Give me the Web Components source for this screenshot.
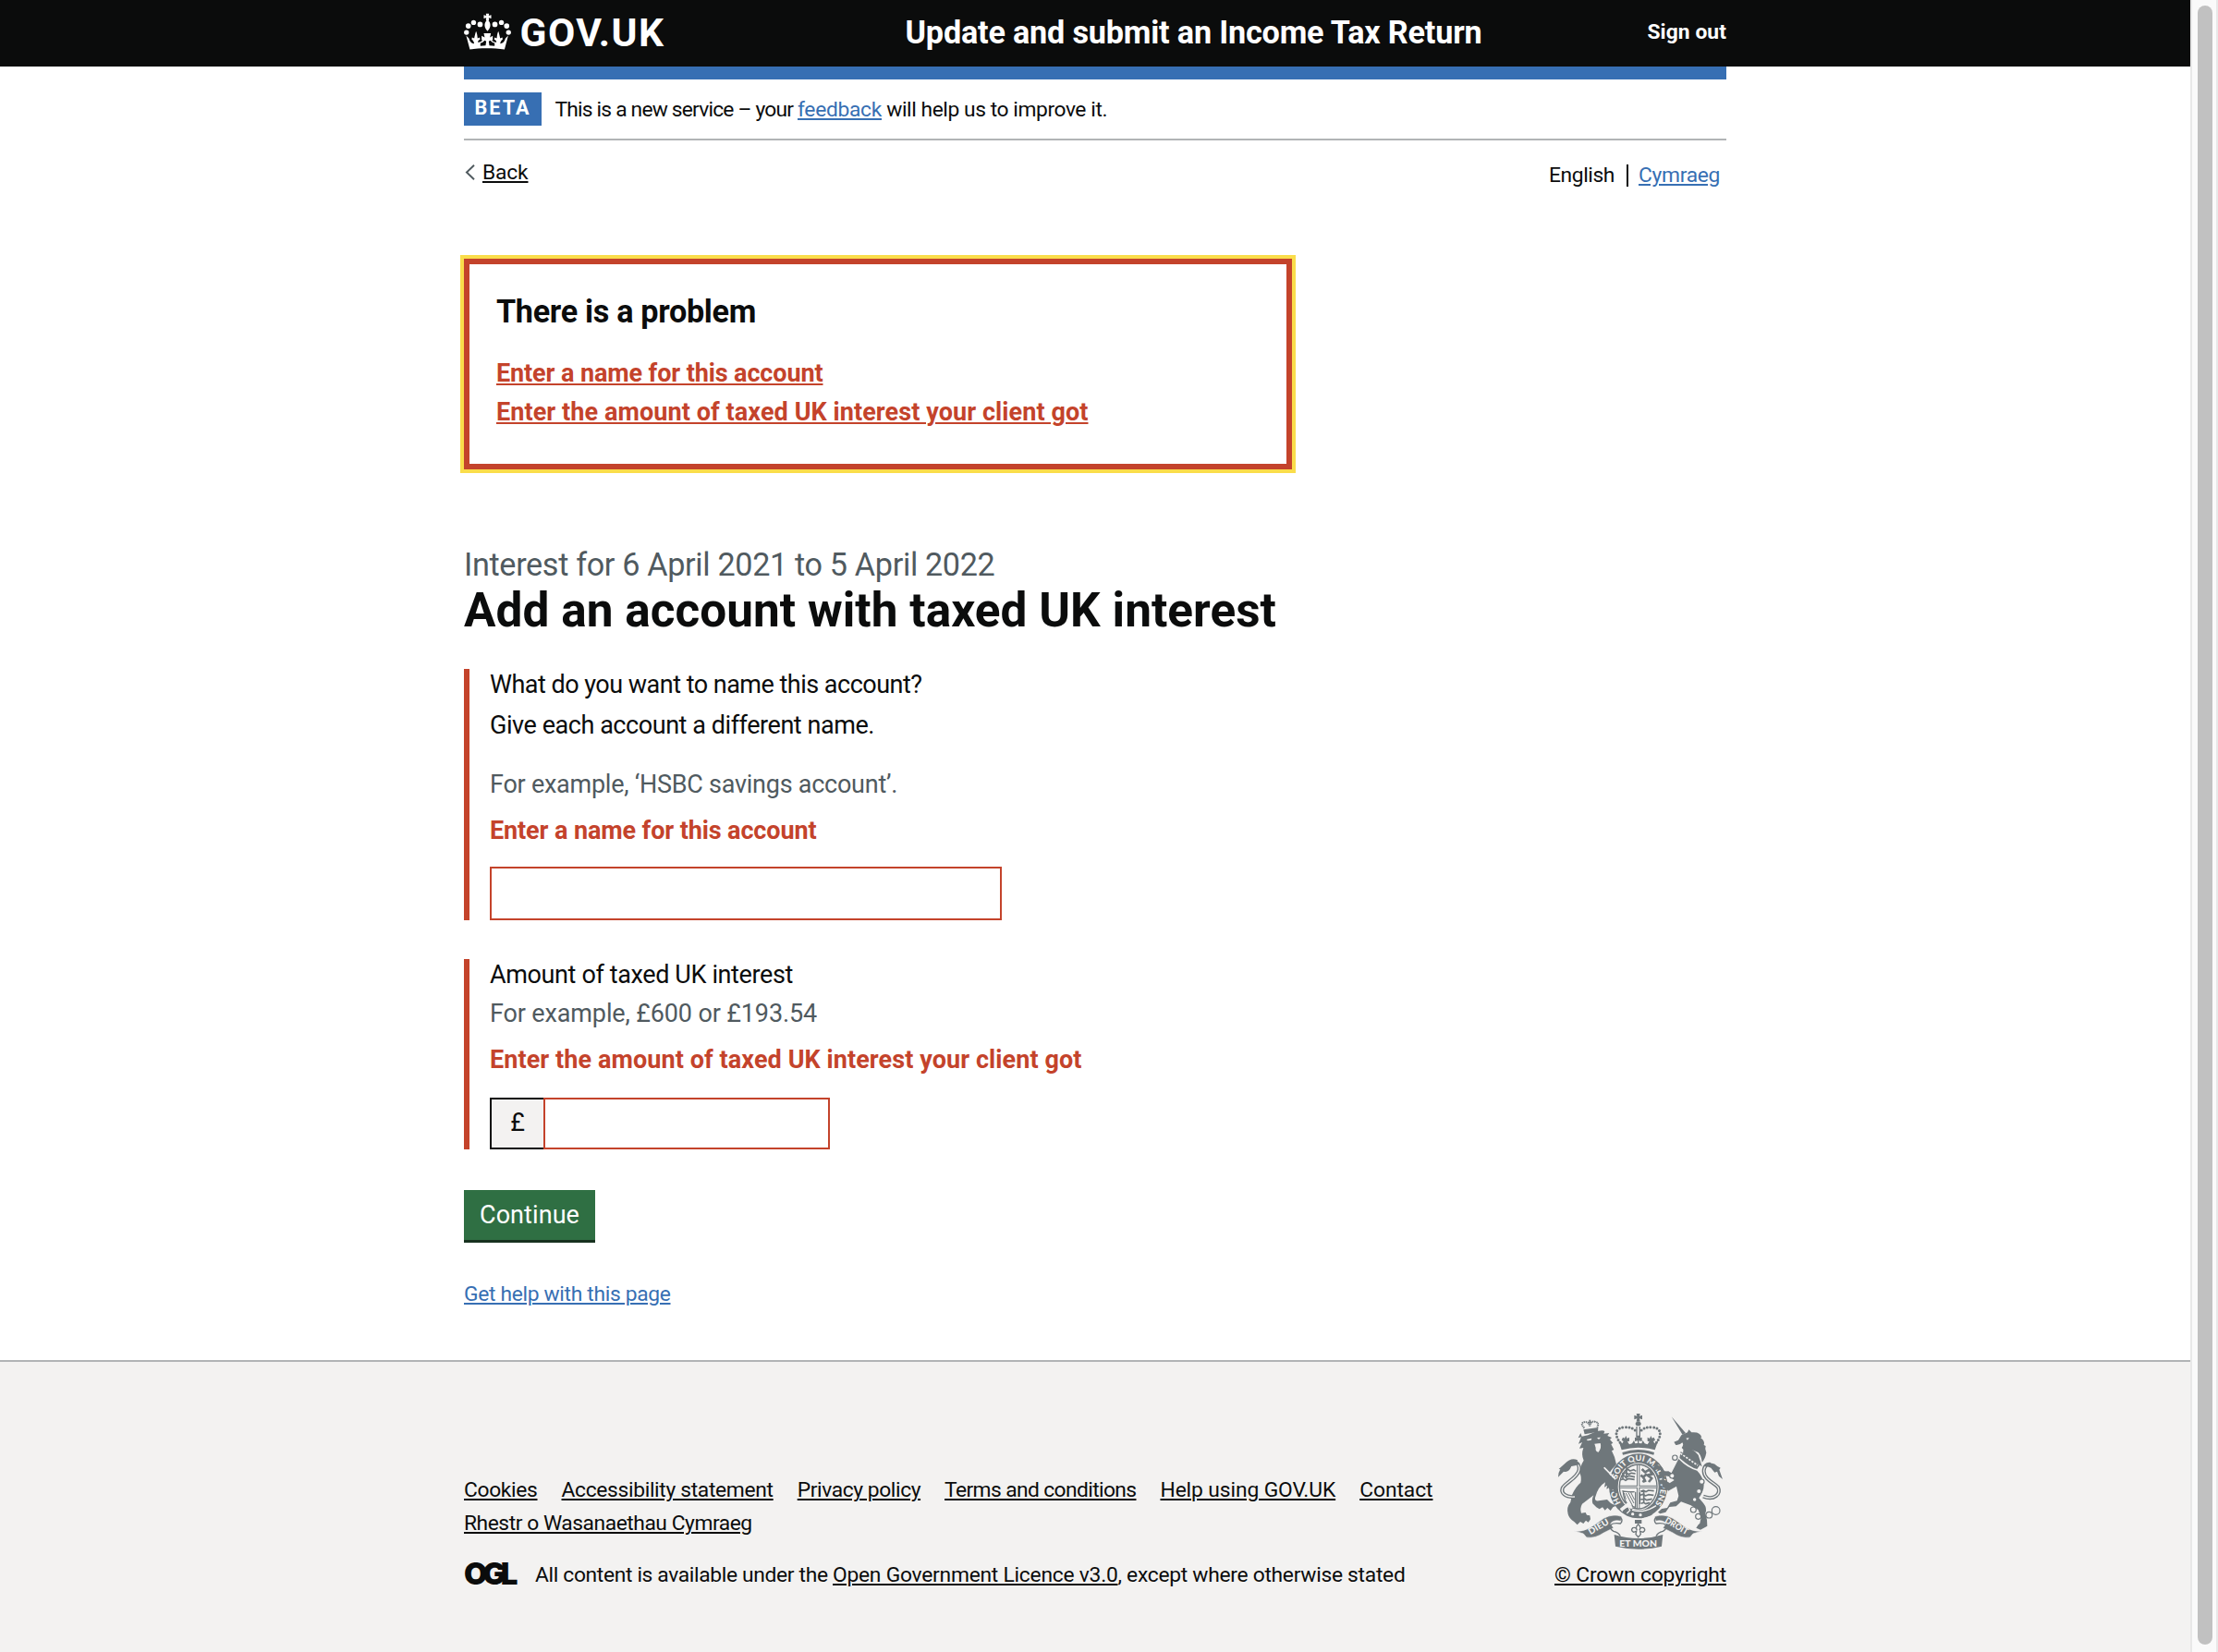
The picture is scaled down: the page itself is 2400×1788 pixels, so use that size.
<!DOCTYPE html>
<html lang="en">
<head>
<meta charset="utf-8">
<title>Add an account with taxed UK interest</title>
<style>
html,body{margin:0;padding:0;background:#fff}
body{font-family:Roboto,"Liberation Sans",sans-serif;color:#0b0c0c;width:2400px;height:1788px;overflow:hidden}
</style>
</head>
<body>
<tax-app></tax-app>
<script>
const define=(name,html,ready)=>customElements.define(name,class extends HTMLElement{
  connectedCallback(){
    if(this.shadowRoot)return;
    this.attachShadow({mode:'open'}).innerHTML=html;
    if(ready)ready(this);
  }
});

/* A run of text tracked to an exact advance width. */
define('type-run',`<style>
:host{display:inline-block;white-space:nowrap;font-size:22.8px;line-height:36px;text-align:left;padding-top:1px;margin-bottom:-1px}
:host([size=m]){font-size:27px;line-height:33px}
:host([size=l]){font-size:34.2px;line-height:42px}
:host([size=xl]){font-size:51.3px;line-height:58.6px}
:host([bold]){font-weight:700}
:host([link]) span{text-decoration:underline;text-decoration-thickness:2px;text-underline-offset:2px}
:host([blue]){color:#376fb3}
:host([red]){color:#c4432b}
:host([grey]){color:#505a5f}
</style><span><slot></slot></span>`,el=>{
  const w=+el.getAttribute('w');
  if(!w)return;
  const natural=el.shadowRoot.querySelector('span').getBoundingClientRect().width;
  el.style.letterSpacing=((w-natural)/el.textContent.length)+'px';
  el.style.width=w+'px';
});

define('crown-mark',`<style>:host{display:block;width:51px;height:39.5px}svg{display:block}</style>
<svg width="51" height="39.5" viewBox="20 26 152 118" fill="#fff">
<path d="M91 28h10l-1 7 8-2v11l-8-2 1 8H91l1-8-8 2V33l8 2z"/>
<path d="M96 47c6 5 10 13 9 21-1 8-5 12-9 17-4-5-8-9-9-17-1-8 3-16 9-21z"/>
<circle cx="28" cy="89" r="8"/><circle cx="34" cy="68" r="8.5"/><circle cx="51" cy="57" r="8"/><circle cx="72" cy="63" r="8.5"/>
<circle cx="164" cy="89" r="8"/><circle cx="158" cy="68" r="8.5"/><circle cx="141" cy="57" r="8"/><circle cx="120" cy="63" r="8.5"/>
<path d="M39 144 27 99l9 9c3 11 9 17 17 17-1-7-5-12-8-13l1-7 7 3c2-8 3-14 6-23 4 9 4 15 5 23l7-3 1 8c-5 1-7 4-7 8 6 1 12-2 16-8l-4 2v-15l10 5-3-13h23l-3 13 9-5v15l-4-2c4 6 10 9 16 8 0-4-2-7-7-8l1-8 7 3c1-8 1-14 5-23 3 9 4 15 6 23l7-3 1 7c-3 1-7 6-8 13 8 0 14-6 17-17l9-9-12 45c-36-5-79-5-115 0z"/>
<path d="M73 124q8-2 14-9l5 3-2 13-17 2zM119 124q-8-2-14-9l-5 3 2 13 17 2z" fill="#0b0c0c"/>
</svg>`);

define('site-header',`<style>
:host{display:block;background:#0b0c0c;height:72px}
.in{width:1366px;margin:0 auto;display:flex;align-items:flex-start;color:#fff}
crown-mark{margin-top:14px}
.logo{font-size:42.5px;line-height:70px;margin-left:9.5px}
.title{line-height:68.6px;margin-left:260px}
.out{line-height:68.4px;margin-left:auto}
</style><div class="in"><crown-mark></crown-mark><type-run class="logo" bold w="157">GOV.UK</type-run>
<type-run class="title" size="l" bold w="624">Update and submit an Income Tax Return</type-run>
<type-run class="out" bold w="85.5">Sign out</type-run></div>`);

define('phase-banner',`<style>
:host{display:flex;align-items:flex-start;border-top:14px solid #376fb3;border-bottom:2px solid #b1b4b6;padding:14px 0;height:36px}
.tag{background:#376fb3;color:#fff;height:36px;width:84px;display:flex;justify-content:center;align-items:flex-start;margin-right:14.5px}
.tag type-run{line-height:32.4px;font-size:21.6px}
</style><div class="tag"><type-run bold w="61">BETA</type-run></div>
<type-run w="262.5">This is a new service – your&nbsp;</type-run><type-run link blue w="91">feedback</type-run><type-run w="244">&nbsp;will help us to improve it.</type-run>`);

define('nav-row',`<style>
:host{display:flex;justify-content:space-between;align-items:flex-start;padding-top:16px}
.back,.lang{display:flex;align-items:flex-start}
.back svg{margin:10px 8px 0 1px}
.lang{padding:3px 7px 0 0}
i{width:2px;height:24px;background:#0b0c0c;margin:7px 11px 0 13px}
</style><div class="back"><svg width="11" height="17" viewBox="0 0 11 17" fill="none" stroke="#505a5f" stroke-width="2"><path d="M10 .8 2 8.5l8 7.7"/></svg><type-run link w="49.5">Back</type-run></div>
<div class="lang"><type-run w="71">English</type-run><i></i><type-run link blue w="88">Cymraeg</type-run></div>`);

define('error-summary',`<style>
:host{display:flex;flex-direction:column;align-items:flex-start;box-sizing:border-box;width:896px;height:228px;border:6px solid #c4432b;outline:4px solid #fadd4b;padding:29.3px 0 0 29px}
::slotted(*){line-height:42px!important}
.h{margin-bottom:23.5px}
</style><type-run class="h" size="l" bold w="281">There is a problem</type-run><slot></slot>`);

define('error-group',`<style>
:host{display:flex;flex-direction:column;align-items:flex-start;box-sizing:border-box;border-left:6px solid #c4432b;padding-left:22px}
</style><slot></slot>`);

define('text-field',`<style>
:host{display:flex;margin-top:auto}
input{box-sizing:border-box;border:2px solid #c4432b;border-radius:0;background:#fff;margin:0;padding:0 7px;font:27px Roboto,sans-serif;outline:0;width:554px;height:58px}
b{display:none;font-weight:400;font-size:27px;line-height:51px;box-sizing:border-box;width:58px;height:56px;border:2px solid #0b0c0c;border-right:0;background:#f3f2f1;text-align:center}
:host([money]) b{display:block}
:host([money]) input{width:310px;height:56px}
</style><b>£</b><input aria-label="value">`);

define('submit-button',`<style>
:host{display:block;box-sizing:border-box;width:142px;height:54px;background:#2f6f43;color:#fff;box-shadow:0 3px 0 #17311f;padding-left:17px}
type-run{line-height:53px}
</style><type-run size="m" w="108">Continue</type-run>`);

define('royal-arms',`<style>:host{display:block;width:178px;height:146px}svg{display:block;overflow:visible}text{font-family:Lato,sans-serif;font-weight:900}</style>
<svg width="178" height="146" viewBox="48 60 534 438" fill="#6f777b" stroke="none">
<defs><path id="ring" d="M252 350A72 84 0 1 1 364 350"/></defs>
<!-- central crown -->
<path d="M302 60h12l-2 8 9-3v14l-9-3 2 10h-12l2-10-9 3V65l9 3z"/><ellipse cx="308" cy="93" rx="9" ry="7"/>
<g fill="none" stroke="#6f777b" stroke-width="9" stroke-linecap="round" stroke-dasharray="0 10.5"><path d="M249 154C228 126 236 106 262 104c18-1 30 4 38 12"/><path d="M367 154c21-28 13-48-13-50-18-1-30 4-38 12"/></g>
<path d="M301 102h4v40h-4zM311 102h4v40h-4z"/>
<path d="m244 147 12 10 4-7-6-4 4-9 6 3 4-8 4 9 7-4v12l-6 2 6 9 9-3 6-10 4 10 8-1v-8l-9 2v-13l8 3-3-9h12l-3 9 9-3v13l-10-2v8l9 1 4-10 6 10 9 3 6-9-6-2v-12l7 4 4-9 4 8 6-3 4 9-6 4 4 7 12-10-11 31q-54-15-108 0z"/>
<path d="M256 186q52-18 104 0l-2 8q-50-16-100 0z"/>
<!-- garter and shield -->
<ellipse cx="308" cy="295" rx="95" ry="105"/><ellipse cx="308" cy="297" rx="66" ry="77" fill="#f3f2f1"/>
<ellipse cx="308" cy="297" rx="61" ry="72" fill="none" stroke="#6f777b" stroke-width="4"/>
<path d="M303 226h3v70h-57v-3h54zM310 226h3v67h54v3h-57zM303 368h3v-69h-57v3h54zM310 368h3v-66h54v-3h-57z"/>
<g fill="none" stroke="#6f777b" stroke-width="5" stroke-linejoin="round"><path d="m266 247 9-6 6 5 12-4 8 5m-41 9 8-5 8 6 10-4 13 2m-47 9 10-3 5 6 12-5 18 4m-47 9 9-3 8 5 9-6 20 3m-38-23v22m12-41v40"/>
<path d="m316 313 9-4 8 5 8-5 18 2m-44 14 10-4 6 6 10-4 17 2m-42 14 12-3 7 5 18-4m-36 15 9-3 6 4 13-4m-19-38v40m-13-35v38"/>
<path d="m320 240 10 10 14-8 10 14-16 4 14 10-10 12m-6-26-12 10-8-6m8 6 8 16m-10 0 8-6" stroke-width="8"/>
<path d="M256 311q12 4 40 3M259 313q2 32 18 45l22 6V314" stroke-width="4"/><path d="m268 318 22 42m-14-43 18 34m-10-35 12 24m-34-22 6 20" stroke-width="3"/></g>
<text font-size="26" fill="#f3f2f1" textLength="376" lengthAdjust="spacingAndGlyphs"><textPath href="#ring" textLength="376" lengthAdjust="spacingAndGlyphs">HONI SOIT QUI MAL Y PENSE</textPath></text>
<path d="m252 374 22-18 12 12" fill="none" stroke="#f3f2f1" stroke-width="12"/>
<path d="M257 376l18-14 16 12h34l38 2-12 14q-48 16-89-6z"/><path d="m262 366 14-4 5 12-10 10M288 373q40 12 78-14" fill="none" stroke="#f3f2f1" stroke-width="4"/><g fill="#f3f2f1"><circle cx="290" cy="386" r="5"/><circle cx="315" cy="389" r="5"/></g>
<!-- lion -->
<path d="m130 112 48-7-1 14-43 8z"/><path d="M133 107q-17-18 4-20 10 1 14 13 3-17 16-14 16 3 8 18" fill="none" stroke="#6f777b" stroke-width="6" stroke-dasharray="4 2"/><path d="M148 80h6l-1 6h5v5h-14v-5h5z"/>
<path d="m125 134 20-4 16-8q30-11 38-5l-3 8 18-2-6 9 14 6-6 6 10 11-6 4 9 18-7 4 9 20 6 24q-16 16-24 29l16 22 12 6-1 24 4 10-13 5-5-16-7 8-6-12-8 4 2-12-9 6 3-16q-24 14-33 50-2 12 12 10l27-4 12 12 17 8-10 5-8 11-10-9-8 8-8-10-10 6-10-6-12-12q-4-12 3-27-20 16-37 28-8 14-3 30l14-2 4 8 10 2 2 12-7 10-8-6-8 10-10-6-10 10-10-10q-16-10-20-25-6-22 8-38l5-24q11-26 28-40 4-17-3-31 0-21 13-41-9-19-1-41l-13 2 9-20-12 5 9-22-10 3 8-16z"/>
<g fill="#f3f2f1"><path d="m140 144 17-4-2 6-11 2zM174 138l12-1-6 7zM166 158l19-2q5 14-6 29-11-1-9-14z"/><path d="m199 233 37 38-3 4-38-39z"/></g>
<path d="M102 330c-32 3-45-13-40-28 8-17 49-33 54-59 2-15-4-24-15-24" fill="none" stroke="#6f777b" stroke-width="12"/><path d="M102 330c-32 3-45-13-40-28 8-17 49-33 54-59 1-9 0-13-3-17" fill="none" stroke="#f3f2f1" stroke-width="4"/>
<path d="M70 222q20-21 41-11l-4 17-16 3q-9 22-25 17l-18 18q0-15 7-25l-5-1z"/>
<!-- unicorn -->
<path d="m416 70 46 53-10 6z"/><path d="m424 152 14-6 10-16 20-9 4-9 9 9q29-3 33 17l-5-1q17 12 12 25l6 3q-4 10 2 22-4 22-14 31-2-22-12-32-19-10-34-9-15 3-20-6 8-10 2-17-8 9-21 8z"/><path d="M463 140l10-2-5 8z" fill="#f3f2f1"/><path d="M455 170q30 0 48 24l12 38-62-40z"/>
<path d="m446 183 62 44-9 13q-21-4-57-36zM439 207q29 30 60 38 20 20 22 47 0 20-16 42l14 16q14 17 7 33l5 22 1 20-22 12-14-6 7-10 5-5 4-18-9-25-24-15-32-12-16 15-22 2-12 17-18 5-7-5 12-11 18-3 10-17 22-6 5-16-7-31-27 15-4-6-14-6-2-14 20 4 20-13-21-16-15-3-12-17-15 3-5-9 9-8 17 6 10 15 22 7z"/><path d="M445 189l56 39" stroke="#f3f2f1" stroke-width="5" stroke-dasharray="7 4"/><path d="m383 248 23-1 17 10-3 9-25-4-4 12 20 12-5 9-20-15z"/>
<path d="M519 329c37 14 58-9 48-30-12-15-45-24-46-52 0-16 10-25 22-22" fill="none" stroke="#6f777b" stroke-width="12"/><path d="M519 329c37 14 58-9 48-30-12-15-45-24-46-52 0-8 2-12 5-15" fill="none" stroke="#f3f2f1" stroke-width="4"/>
<path d="M528 230q19-18 37 1l10 5-4 6 11 31-12-10-6-15-8 3-12-15z"/>
<g fill="#f3f2f1" stroke="#6f777b" stroke-width="3.5"><circle cx="427" cy="203" r="8"/><circle cx="418" cy="262" r="8"/><circle cx="514" cy="281" r="8"/><circle cx="505" cy="312" r="8"/><circle cx="491" cy="339" r="7"/></g>
<g fill="none" stroke="#6f777b" stroke-width="3.5"><circle cx="487" cy="372" r="9"/><circle cx="503" cy="394" r="9"/><circle cx="538" cy="389" r="10"/><circle cx="560" cy="375" r="13"/></g>
<!-- motto ribbon -->
<path d="M98 440q28 7 62-15l36-25q30-17 58-6l-2 15q-23-6-34 8l10 14-32 16q-27 19-56 15l-10-12z" stroke="#f3f2f1" stroke-width="2"/><path d="M518 440q-28 7-62-15l-36-25q-30-17-58-6l2 15q23-6 34 8l-10 14 32 16q27 19 56 15l10-12z" stroke="#f3f2f1" stroke-width="2"/>
<path d="M230 453q78 24 158 0l-4 38q-76 18-150 0z"/>
<g fill="none" stroke="#6f777b" stroke-width="4"><path d="M250 396q10 12 0 21-22-3-31 4-7 11 9 21 16 3 22 16M366 396q-10 12 0 21 22-3 31 4 7 11-9 21-16 3-22 16"/></g>
<path d="M297 405h22v12h-22z"/><path d="M308 419q11 9 4 19 3-11 14-7 8 8-3 14l-9-3 2 10-8 9-8-9 2-10-9 3q-11-6-3-14 11-4 14 7-7-10 4-19z" fill="#f3f2f1" stroke="#6f777b" stroke-width="4"/>
<g fill="#f3f2f1" font-size="28" text-anchor="middle"><text transform="translate(184 435) rotate(-31)" textLength="72" lengthAdjust="spacingAndGlyphs">DIEU</text><text x="308" y="492" textLength="122" lengthAdjust="spacingAndGlyphs">ET MON</text><text transform="translate(428 433) rotate(30)" textLength="82" lengthAdjust="spacingAndGlyphs">DROIT</text></g>
</svg>`);

define('site-footer',`<style>
:host{display:block;border-top:2px solid #b1b4b6;background:#f3f2f1;height:314px}
.in{width:1366px;margin:0 auto;display:flex;justify-content:space-between;align-items:flex-start}
.links{display:flex;flex-wrap:wrap;column-gap:26px;width:1080px;padding-top:120.2px}
.lic{display:flex;align-items:flex-start;margin-top:20px}
.ogl{font:900 33px/36px Inter,sans-serif;margin:-2px 24px 0 0;flex:none}
.right{display:flex;flex-direction:column;align-items:flex-end;padding-top:56px}
royal-arms{margin:0 4px 10.2px 0}
</style><div class="in"><div class="left"><div class="links">
<type-run link w="79.5">Cookies</type-run><type-run link w="229.2">Accessibility statement</type-run><type-run link w="133.4">Privacy policy</type-run><type-run link w="207.4">Terms and conditions</type-run><type-run link w="189.7">Help using GOV.UK</type-run><type-run link w="79.3">Contact</type-run><type-run link w="311.7">Rhestr o Wasanaethau Cymraeg</type-run></div>
<div class="lic"><type-run class="ogl" w="53">OGL</type-run><type-run w="322">All content is available under the&nbsp;</type-run><type-run link w="308.5">Open Government Licence v3.0</type-run><type-run w="311">, except where otherwise stated</type-run></div></div>
<div class="right"><royal-arms></royal-arms><type-run link w="186">© Crown copyright</type-run></div></div>`);

define('scroll-track',`<style>
:host{display:block;box-sizing:border-box;width:30px;height:1788px;background:#fafafa;border:solid #e8e8e8;border-width:0 2px;padding:6px 4px 8px 6px}
div{height:1774px;border-radius:8px;background:#c1c1c1}
</style><div></div>`);

define('tax-app',`<style>
:host{display:flex;width:2400px;height:1788px}
.page{width:2370px;display:flex;flex-direction:column}
main{width:1366px;margin:0 auto;height:1400px;display:flex;flex-direction:column;align-items:flex-start}
phase-banner,nav-row{align-self:stretch}
nav-row{box-sizing:border-box;height:128px;flex:none}
.cap{margin-top:81.3px}
.g1{height:272px;margin-top:34.2px}
.g2{height:206px;margin-top:42px}
.t2{margin-top:11px}.t3{margin-top:31px}.t4{margin-top:17px}.t5{margin-top:9px}
submit-button{margin-top:44px}
.help{margin-top:40.2px}
</style>
<div class="page"><site-header></site-header>
<main><phase-banner></phase-banner><nav-row></nav-row>
<error-summary><type-run size="m" bold link red w="353.5">Enter a name for this account</type-run><type-run size="m" bold link red w="640.5">Enter the amount of taxed UK interest your client got</type-run></error-summary>
<type-run class="cap" size="l" grey w="574.5">Interest for 6 April 2021 to 5 April 2022</type-run>
<type-run class="h1" size="xl" bold w="879">Add an account with taxed UK interest</type-run>
<error-group class="g1"><type-run size="m" w="467.5">What do you want to name this account?</type-run><type-run class="t2" size="m" w="416">Give each account a different name.</type-run><type-run class="t3" size="m" grey w="441">For example, ‘HSBC savings account’.</type-run><type-run class="t4" size="m" bold red w="353.5">Enter a name for this account</type-run><text-field></text-field></error-group>
<error-group class="g2"><type-run size="m" w="328">Amount of taxed UK interest</type-run><type-run class="t5" size="m" grey w="354">For example, £600 or £193.54</type-run><type-run class="t4" size="m" bold red w="640.5">Enter the amount of taxed UK interest your client got</type-run><text-field money></text-field></error-group>
<submit-button></submit-button>
<type-run class="help" link blue w="223.5">Get help with this page</type-run></main>
<site-footer></site-footer></div><scroll-track></scroll-track>`);
</script>
</body>
</html>
